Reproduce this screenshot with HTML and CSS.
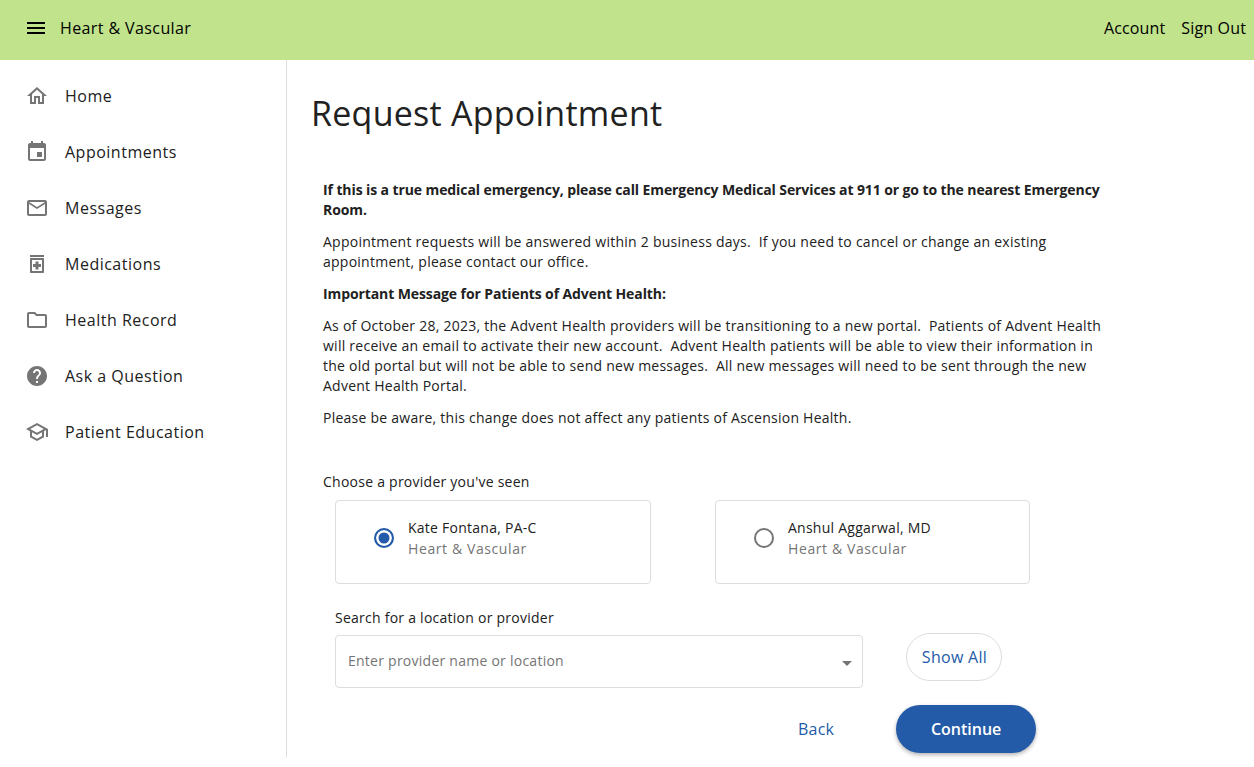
FILE: index.html
```html
<!DOCTYPE html>
<html lang="en">
<head>
    <meta charset="UTF-8">
    <title>Request Appointment</title>
    <link rel="stylesheet" href="styles.css">
</head>
<body>

    <!-- Header -->
    <header class="top-bar">
        <div class="top-left">
            <svg class="menu-icon" viewBox="0 0 24 24" width="24" height="24"><path d="M3 18h18v-2H3v2zm0-5h18v-2H3v2zm0-7v2h18V6H3z"/></svg>
            <span>Heart &amp; Vascular</span>
        </div>
        <nav class="top-right">
            <a>Account</a>
            <a>Sign Out</a>
        </nav>
    </header>

    <div class="page">
        <!-- Side menu -->
        <aside class="side-nav">
            <a class="nav-item">
                <svg viewBox="0 0 24 24" width="24" height="24"><path d="M12 5.69l5 4.5V18h-2v-6H9v6H7v-7.81l5-4.5M12 3L2 12h3v8h6v-6h2v6h6v-8h3L12 3z"/></svg>
                <span>Home</span>
            </a>
            <a class="nav-item">
                <svg viewBox="0 0 24 24" width="24" height="24"><path d="M17 12h-5v5h5v-5zM16 1v2H8V1H6v2H5c-1.11 0-1.99.9-1.99 2L3 19c0 1.1.89 2 2 2h14c1.1 0 2-.9 2-2V5c0-1.1-.9-2-2-2h-1V1h-2zm3 18H5V8h14v11z"/></svg>
                <span>Appointments</span>
            </a>
            <a class="nav-item">
                <svg viewBox="0 0 24 24" width="24" height="24"><path d="M22 6c0-1.1-.9-2-2-2H4c-1.1 0-2 .9-2 2v12c0 1.1.9 2 2 2h16c1.100 0 2-.9 2-2V6zm-2 0l-8 5-8-5h16zm0 12H4V8l8 5 8-5v10z"/></svg>
                <span>Messages</span>
            </a>
            <a class="nav-item">
                <svg viewBox="0 0 24 24" width="24" height="24"><path d="M5 3h14v2H5V3zm1 3h12c.55 0 1 .45 1 1v13c0 .55-.45 1-1 1H6c-.55 0-1-.45-1-1V7c0-.55.45-1 1-1zm1 2v11h10V8H7zm3.500 1.500h3v2.500H16v3h-2.500v2.500h-3V15H8v-3h2.500V9.500z"/></svg>
                <span>Medications</span>
            </a>
            <a class="nav-item">
                <svg viewBox="0 0 24 24" width="24" height="24"><path d="M9.170 6l2 2H20v10H4V6h5.170M10 4H4c-1.100 0-1.990.9-1.990 2L2 18c0 1.100.9 2 2 2h16c1.100 0 2-.9 2-2V8c0-1.100-.9-2-2-2h-8l-2-2z"/></svg>
                <span>Health Record</span>
            </a>
            <a class="nav-item">
                <svg viewBox="0 0 24 24" width="24" height="24"><path d="M12 2C6.480 2 2 6.480 2 12s4.480 10 10 10 10-4.480 10-10S17.520 2 12 2zm1 17h-2v-2h2v2zm2.070-7.750l-.9.920C13.450 12.900 13 13.500 13 15h-2v-.5c0-1.100.45-2.100 1.170-2.830l1.240-1.260c.37-.36.59-.86.59-1.410 0-1.100-.9-2-2-2s-2 .9-2 2H8c0-2.210 1.790-4 4-4s4 1.790 4 4c0 .88-.36 1.680-.93 2.250z"/></svg>
                <span>Ask a Question</span>
            </a>
            <a class="nav-item">
                <svg viewBox="0 0 24 24" width="24" height="24"><path d="M12 3L1 9l4 2.180v6L12 21l7-3.820v-6l2-1.090V17h2V9L12 3zm6.820 6L12 12.720 5.180 9 12 5.280 18.820 9zM17 16l-5 2.720L7 16v-3.730L12 15l5-2.730V16z"/></svg>
                <span>Patient Education</span>
            </a>
        </aside>

        <!-- Main content -->
        <main class="content">
            <h1>Request Appointment</h1>

            <div class="notice">
                <p><b>If this is a true medical emergency, please call Emergency Medical Services at 911 or go to the nearest Emergency Room.</b></p>
                <p>Appointment requests will be answered within 2 business days.&nbsp; If you need to cancel or change an existing appointment, please contact our office.</p>
                <p><b>Important Message for Patients of Advent Health:</b></p>
                <p>As of October 28, 2023, the Advent Health providers will be transitioning to a new portal.&nbsp; Patients of Advent Health will receive an email to activate their new account.&nbsp; Advent Health patients will be able to view their information in the old portal but will not be able to send new messages.&nbsp; All new messages will need to be sent through the new Advent Health Portal.</p>
                <p>Please be aware, this change does not affect any patients of Ascension Health.</p>
            </div>

            <div class="field-label">Choose a provider you've seen</div>
            <div class="provider-list">
                <div class="provider-card">
                    <span class="radio selected"></span>
                    <div>
                        <div class="provider-name">Kate Fontana, PA-C</div>
                        <div class="provider-dept">Heart &amp; Vascular</div>
                    </div>
                </div>
                <div class="provider-card">
                    <span class="radio"></span>
                    <div>
                        <div class="provider-name">Anshul Aggarwal, MD</div>
                        <div class="provider-dept">Heart &amp; Vascular</div>
                    </div>
                </div>
            </div>

            <div class="search-area">
                <div class="search-label">Search for a location or provider</div>
                <div class="search-row">
                    <div class="search-box">
                        <span>Enter provider name or location</span>
                        <span class="caret"></span>
                    </div>
                    <button class="show-all">Show All</button>
                </div>
            </div>

            <div class="actions">
                <button class="back">Back</button>
                <button class="continue">Continue</button>
            </div>
        </main>
    </div>

</body>
</html>
```

FILE: styles.css
```css
body {
    font-family: "Open Sans", "Liberation Sans", sans-serif;
    margin: 0;
    background-color: #ffffff;
    color: #212121;
    height: 767px;
    overflow: hidden;
}

/* Header */
.top-bar {
    height: 60px;
    box-sizing: border-box;
    background-color: #c1e38c;
    color: #000000;
    display: flex;
    align-items: center;
    justify-content: space-between;
    padding: 0 8px 4px 24px;
    font-size: 16px;
}

.top-left {
    display: flex;
    align-items: center;
    gap: 12px;
    letter-spacing: 0.4px;
}

.top-right {
    display: flex;
    gap: 16px;
    letter-spacing: 0.15px;
}

/* Side menu */
.page {
    display: flex;
    height: 697px;
}

.side-nav {
    width: 286px;
    border-right: 1px solid #dddddd;
    padding-top: 8px;
    flex-shrink: 0;
}

.nav-item {
    height: 56px;
    display: flex;
    align-items: center;
    padding-left: 25px;
    gap: 16px;
    font-size: 16px;
    letter-spacing: 0.5px;
    color: #212121;
}

.nav-item svg {
    fill: #757575;
}

/* Main */
.content {
    flex: 1;
    padding-left: 24px;
    font-size: 14px;
    line-height: 20px;
    letter-spacing: 0.25px;
}

h1 {
    font-size: 34px;
    font-weight: 400;
    line-height: 46px;
    letter-spacing: 0.25px;
    margin: 30px 0 0;
}

.notice {
    margin: 44px 0 0 12px;
    width: 780px;
}

.notice p {
    margin: 0 0 12px;
}

.notice b {
    letter-spacing: -0.1px;
}

.field-label {
    margin: 44px 0 0 12px;
}

.provider-list {
    display: flex;
    gap: 64px;
    margin: 8px 0 0 24px;
}

.provider-card {
    width: 316px;
    height: 84px;
    box-sizing: border-box;
    border: 1px solid #dddddd;
    border-radius: 4px;
    display: flex;
    align-items: flex-start;
    padding: 16px 0 0 38px;
    gap: 14px;
}

.provider-card + .provider-card {
    width: 315px;
}

.radio {
    width: 20px;
    height: 20px;
    box-sizing: border-box;
    border: 2px solid #757575;
    border-radius: 50%;
    margin-top: 11px;
    flex-shrink: 0;
}

.radio.selected {
    border-color: #235ba8;
    background-color: #235ba8;
    box-shadow: inset 0 0 0 2.5px #ffffff;
}

.provider-name {
    line-height: 21px;
}

.provider-dept {
    color: #757575;
    letter-spacing: 0.6px;
    line-height: 21px;
}

.search-area {
    margin: 24px 0 0 24px;
}

.search-row {
    display: flex;
    align-items: flex-start;
    gap: 43px;
    margin-top: 7px;
}

.search-box {
    width: 528px;
    height: 53px;
    box-sizing: border-box;
    border: 1px solid #dddddd;
    border-radius: 4px;
    display: flex;
    align-items: center;
    justify-content: space-between;
    padding: 0 10px 2px 12px;
    color: #757575;
}

.caret {
    width: 0;
    height: 0;
    border-left: 5px solid transparent;
    border-right: 5px solid transparent;
    border-top: 5px solid #757575;
    margin-top: 6px;
}

button {
    font-family: inherit;
    font-size: 16px;
    cursor: pointer;
}

.show-all {
    width: 96px;
    height: 48px;
    margin-top: -2px;
    background-color: #ffffff;
    border: 1px solid #dddddd;
    border-radius: 24px;
    color: #235ba8;
    padding: 0 0 0 1px;
    letter-spacing: 0.3px;
}

.actions {
    display: flex;
    align-items: center;
    margin: 17px 0 0 487px;
    gap: 62px;
}

.back {
    background: none;
    border: none;
    color: #235ba8;
    padding: 0;
    letter-spacing: 0.2px;
}

.continue {
    width: 140px;
    height: 48px;
    background-color: #235ba8;
    color: #ffffff;
    border: none;
    border-radius: 24px;
    font-weight: 600;
    box-shadow: 0 2px 4px rgba(0, 0, 0, 0.3);
}
```
